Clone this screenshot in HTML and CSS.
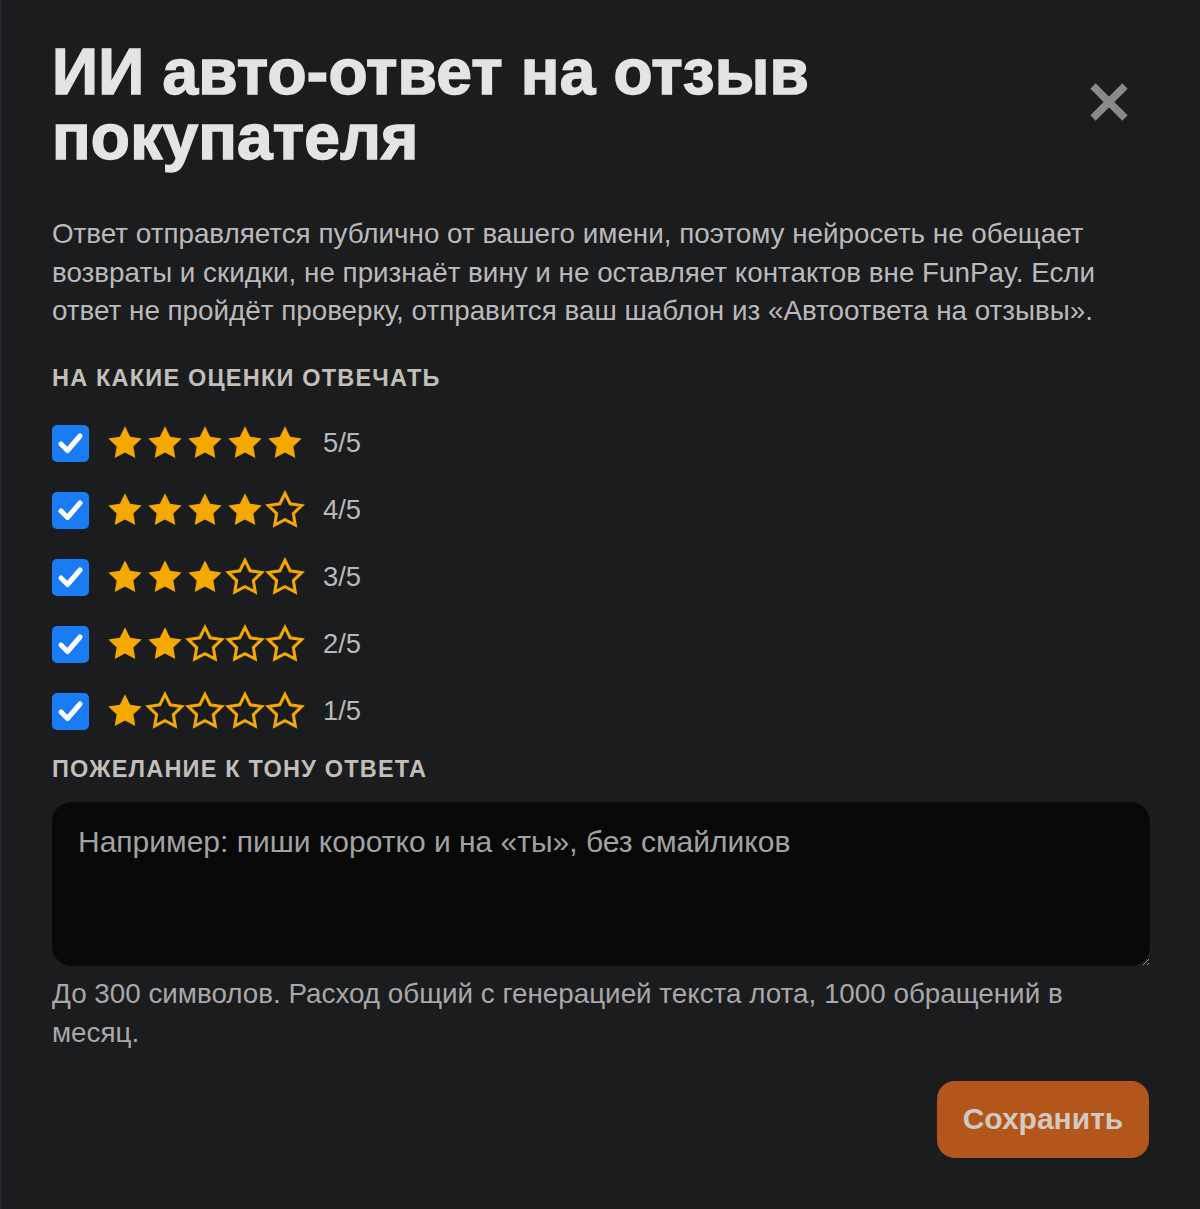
FILE: index.html
```html
<!DOCTYPE html>
<html lang="ru">
<head>
<meta charset="utf-8">
<title>ИИ авто-ответ на отзыв покупателя</title>
<link rel="stylesheet" href="styles.css">
</head>
<body>
<div class="modal">
  <div class="header">
    <h1 class="title">ИИ авто-ответ на отзыв покупателя</h1>
    <button class="close" aria-label="Закрыть">
      <svg width="40" height="40" viewBox="0 0 40 40"><path d="M4 4 L36 36 M36 4 L4 36" stroke="#8a8a8a" stroke-width="7.5" fill="none"/></svg>
    </button>
  </div>
  <p class="desc">Ответ отправляется публично от вашего имени, поэтому нейросеть не обещает возвраты и скидки, не признаёт вину и не оставляет контактов вне FunPay. Если ответ не пройдёт проверку, отправится ваш шаблон из «Автоответа на отзывы».</p>

  <div class="section-title">НА КАКИЕ ОЦЕНКИ ОТВЕЧАТЬ</div>
  <div class="rows">
    <div class="row">
      <span class="check"><svg width="37" height="37" viewBox="0 0 37 37"><path d="M9 19 L15.5 25.5 L28 11" stroke="#fff" stroke-width="5" fill="none" stroke-linecap="round" stroke-linejoin="round"/></svg></span>
      <span class="stars">
        <svg class="star" viewBox="0 0 24 24"><polygon class="full" points="12,2 15.09,8.26 22,9.27 17,14.14 18.18,21.02 12,17.77 5.82,21.02 7,14.14 2,9.27 8.91,8.26"/></svg><svg class="star" viewBox="0 0 24 24"><polygon class="full" points="12,2 15.09,8.26 22,9.27 17,14.14 18.18,21.02 12,17.77 5.82,21.02 7,14.14 2,9.27 8.91,8.26"/></svg><svg class="star" viewBox="0 0 24 24"><polygon class="full" points="12,2 15.09,8.26 22,9.27 17,14.14 18.18,21.02 12,17.77 5.82,21.02 7,14.14 2,9.27 8.91,8.26"/></svg><svg class="star" viewBox="0 0 24 24"><polygon class="full" points="12,2 15.09,8.26 22,9.27 17,14.14 18.18,21.02 12,17.77 5.82,21.02 7,14.14 2,9.27 8.91,8.26"/></svg><svg class="star" viewBox="0 0 24 24"><polygon class="full" points="12,2 15.09,8.26 22,9.27 17,14.14 18.18,21.02 12,17.77 5.82,21.02 7,14.14 2,9.27 8.91,8.26"/></svg>
      </span>
      <span class="label">5/5</span>
    </div>
    <div class="row">
      <span class="check"><svg width="37" height="37" viewBox="0 0 37 37"><path d="M9 19 L15.5 25.5 L28 11" stroke="#fff" stroke-width="5" fill="none" stroke-linecap="round" stroke-linejoin="round"/></svg></span>
      <span class="stars">
        <svg class="star" viewBox="0 0 24 24"><polygon class="full" points="12,2 15.09,8.26 22,9.27 17,14.14 18.18,21.02 12,17.77 5.82,21.02 7,14.14 2,9.27 8.91,8.26"/></svg><svg class="star" viewBox="0 0 24 24"><polygon class="full" points="12,2 15.09,8.26 22,9.27 17,14.14 18.18,21.02 12,17.77 5.82,21.02 7,14.14 2,9.27 8.91,8.26"/></svg><svg class="star" viewBox="0 0 24 24"><polygon class="full" points="12,2 15.09,8.26 22,9.27 17,14.14 18.18,21.02 12,17.77 5.82,21.02 7,14.14 2,9.27 8.91,8.26"/></svg><svg class="star" viewBox="0 0 24 24"><polygon class="full" points="12,2 15.09,8.26 22,9.27 17,14.14 18.18,21.02 12,17.77 5.82,21.02 7,14.14 2,9.27 8.91,8.26"/></svg><svg class="star" viewBox="0 0 24 24"><polygon class="empty" points="12,2 15.09,8.26 22,9.27 17,14.14 18.18,21.02 12,17.77 5.82,21.02 7,14.14 2,9.27 8.91,8.26"/></svg>
      </span>
      <span class="label">4/5</span>
    </div>
    <div class="row">
      <span class="check"><svg width="37" height="37" viewBox="0 0 37 37"><path d="M9 19 L15.5 25.5 L28 11" stroke="#fff" stroke-width="5" fill="none" stroke-linecap="round" stroke-linejoin="round"/></svg></span>
      <span class="stars">
        <svg class="star" viewBox="0 0 24 24"><polygon class="full" points="12,2 15.09,8.26 22,9.27 17,14.14 18.18,21.02 12,17.77 5.82,21.02 7,14.14 2,9.27 8.91,8.26"/></svg><svg class="star" viewBox="0 0 24 24"><polygon class="full" points="12,2 15.09,8.26 22,9.27 17,14.14 18.18,21.02 12,17.77 5.82,21.02 7,14.14 2,9.27 8.91,8.26"/></svg><svg class="star" viewBox="0 0 24 24"><polygon class="full" points="12,2 15.09,8.26 22,9.27 17,14.14 18.18,21.02 12,17.77 5.82,21.02 7,14.14 2,9.27 8.91,8.26"/></svg><svg class="star" viewBox="0 0 24 24"><polygon class="empty" points="12,2 15.09,8.26 22,9.27 17,14.14 18.18,21.02 12,17.77 5.82,21.02 7,14.14 2,9.27 8.91,8.26"/></svg><svg class="star" viewBox="0 0 24 24"><polygon class="empty" points="12,2 15.09,8.26 22,9.27 17,14.14 18.18,21.02 12,17.77 5.82,21.02 7,14.14 2,9.27 8.91,8.26"/></svg>
      </span>
      <span class="label">3/5</span>
    </div>
    <div class="row">
      <span class="check"><svg width="37" height="37" viewBox="0 0 37 37"><path d="M9 19 L15.5 25.5 L28 11" stroke="#fff" stroke-width="5" fill="none" stroke-linecap="round" stroke-linejoin="round"/></svg></span>
      <span class="stars">
        <svg class="star" viewBox="0 0 24 24"><polygon class="full" points="12,2 15.09,8.26 22,9.27 17,14.14 18.18,21.02 12,17.77 5.82,21.02 7,14.14 2,9.27 8.91,8.26"/></svg><svg class="star" viewBox="0 0 24 24"><polygon class="full" points="12,2 15.09,8.26 22,9.27 17,14.14 18.18,21.02 12,17.77 5.82,21.02 7,14.14 2,9.27 8.91,8.26"/></svg><svg class="star" viewBox="0 0 24 24"><polygon class="empty" points="12,2 15.09,8.26 22,9.27 17,14.14 18.18,21.02 12,17.77 5.82,21.02 7,14.14 2,9.27 8.91,8.26"/></svg><svg class="star" viewBox="0 0 24 24"><polygon class="empty" points="12,2 15.09,8.26 22,9.27 17,14.14 18.18,21.02 12,17.77 5.82,21.02 7,14.14 2,9.27 8.91,8.26"/></svg><svg class="star" viewBox="0 0 24 24"><polygon class="empty" points="12,2 15.09,8.26 22,9.27 17,14.14 18.18,21.02 12,17.77 5.82,21.02 7,14.14 2,9.27 8.91,8.26"/></svg>
      </span>
      <span class="label">2/5</span>
    </div>
    <div class="row">
      <span class="check"><svg width="37" height="37" viewBox="0 0 37 37"><path d="M9 19 L15.5 25.5 L28 11" stroke="#fff" stroke-width="5" fill="none" stroke-linecap="round" stroke-linejoin="round"/></svg></span>
      <span class="stars">
        <svg class="star" viewBox="0 0 24 24"><polygon class="full" points="12,2 15.09,8.26 22,9.27 17,14.14 18.18,21.02 12,17.77 5.82,21.02 7,14.14 2,9.27 8.91,8.26"/></svg><svg class="star" viewBox="0 0 24 24"><polygon class="empty" points="12,2 15.09,8.26 22,9.27 17,14.14 18.18,21.02 12,17.77 5.82,21.02 7,14.14 2,9.27 8.91,8.26"/></svg><svg class="star" viewBox="0 0 24 24"><polygon class="empty" points="12,2 15.09,8.26 22,9.27 17,14.14 18.18,21.02 12,17.77 5.82,21.02 7,14.14 2,9.27 8.91,8.26"/></svg><svg class="star" viewBox="0 0 24 24"><polygon class="empty" points="12,2 15.09,8.26 22,9.27 17,14.14 18.18,21.02 12,17.77 5.82,21.02 7,14.14 2,9.27 8.91,8.26"/></svg><svg class="star" viewBox="0 0 24 24"><polygon class="empty" points="12,2 15.09,8.26 22,9.27 17,14.14 18.18,21.02 12,17.77 5.82,21.02 7,14.14 2,9.27 8.91,8.26"/></svg>
      </span>
      <span class="label">1/5</span>
    </div>
  </div>

  <div class="section-title section-title--tone">ПОЖЕЛАНИЕ К ТОНУ ОТВЕТА</div>
  <textarea class="tone" placeholder="Например: пиши коротко и на «ты», без смайликов"></textarea>
  <p class="hint">До 300 символов. Расход общий с генерацией текста лота, 1000 обращений в месяц.</p>
  <div class="actions">
    <button class="save">Сохранить</button>
  </div>
</div>
</body>
</html>
```
FILE: styles.css
```css
html, body {
  margin: 0;
  padding: 0;
  background: #1b1c1e;
}
body {
  font-family: "Liberation Sans", Arial, sans-serif;
  color: #b9b9b9;
  border-left: 2px solid #26272a;
  min-height: 1209px;
  box-sizing: border-box;
}
.modal {
  padding: 40px 51px 40px 50px;
}
.header {
  display: flex;
  justify-content: space-between;
  align-items: flex-start;
}
.title {
  margin: 0;
  font-size: 64px;
  line-height: 65px;
  font-weight: 700;
  letter-spacing: 0.2px;
  color: #e4e4e4;
  max-width: 860px;
  -webkit-text-stroke: 1.5px #e4e4e4;
}
.close {
  background: none;
  border: none;
  padding: 0;
  margin: 42px 20px 0 0;
  width: 40px;
  height: 40px;
  cursor: pointer;
}
.close svg { display: block; }
.desc {
  margin: 45px 0 0;
  font-size: 27.8px;
  line-height: 38.5px;
  color: #bababa;
  max-width: 1095px;
}
.section-title {
  margin-top: 32px;
  font-size: 23.5px;
  line-height: 30px;
  font-weight: 700;
  letter-spacing: 1.2px;
  color: #c2beb8;
}
.section-title--tone {
  margin-top: 24px;
}
.rows {
  margin-top: 32px;
  display: flex;
  flex-direction: column;
  gap: 30px;
}
.row {
  display: flex;
  align-items: center;
  height: 37px;
}
.check {
  width: 37px;
  height: 37px;
  border-radius: 5px;
  background: #1a7cf4;
  display: block;
  flex: none;
}
.check svg { display: block; }
.stars {
  display: flex;
  margin-left: 16px;
}
.star {
  width: 40px;
  height: 40px;
  display: block;
}
.star .full {
  fill: #f4a800;
}
.star .empty {
  fill: none;
  stroke: #f4a800;
  stroke-width: 1.8;
  stroke-linejoin: miter;
}
.label {
  margin-left: 18px;
  font-size: 27.4px;
  color: #b8b8b8;
}
.tone {
  display: block;
  box-sizing: border-box;
  margin-top: 18px;
  width: 1098px;
  height: 164px;
  background: #080808;
  border: none;
  border-radius: 20px;
  padding: 22px 26px;
  font-family: "Liberation Sans", Arial, sans-serif;
  font-size: 30px;
  line-height: 36px;
  color: #c0c0c0;
  outline: none;
  resize: vertical;
}
.tone::placeholder {
  color: #a2a2a2;
}
.hint {
  margin: 8px 0 0;
  font-size: 27.8px;
  line-height: 39px;
  color: #a8a8a8;
  max-width: 1070px;
}
.actions {
  display: flex;
  justify-content: flex-end;
  margin-top: 29px;
}
.save {
  width: 212px;
  height: 77px;
  border: none;
  border-radius: 18px;
  background: #b3561b;
  color: #d2c9c2;
  font-family: "Liberation Sans", Arial, sans-serif;
  font-size: 30px;
  font-weight: 700;
  cursor: pointer;
}
```
